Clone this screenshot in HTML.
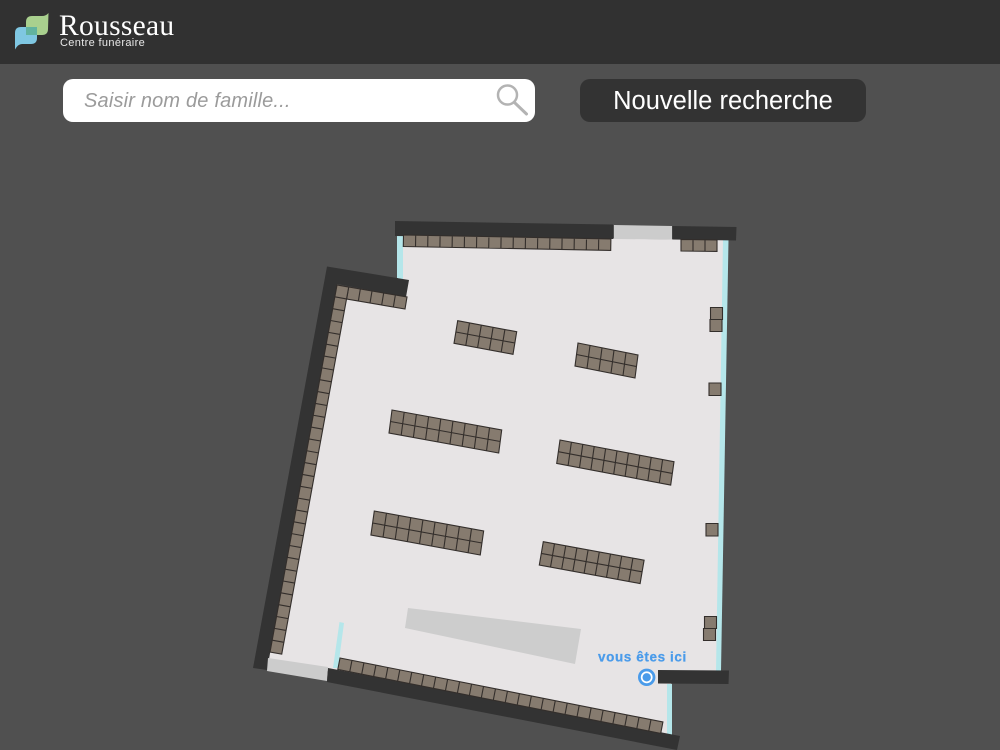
<!DOCTYPE html>
<html lang="fr">
<head>
<meta charset="utf-8">
<title>Rousseau</title>
<style>
html,body{margin:0;padding:0;width:1000px;height:750px;overflow:hidden;background:#505050}
#bar{position:absolute;left:0;top:0;width:1000px;height:64px;background:#313131}
#name{position:absolute;left:59px;top:10px;font:29.5px/32px "Liberation Serif",serif;color:#fff;letter-spacing:.3px}
#sub{position:absolute;left:60px;top:37px;font:11px/13px "Liberation Sans",sans-serif;color:#e8e8e8;letter-spacing:.35px}
#search{position:absolute;left:63px;top:79px;width:472px;height:43px;background:#fff;border-radius:10px}
#ph{position:absolute;left:21px;top:9.500px;font:italic 20px/25px "Liberation Sans",sans-serif;color:#9b9b9b;letter-spacing:.18px}
#btn{position:absolute;left:580px;top:79px;width:286px;height:43px;background:#333;border-radius:10px;color:#fff;font:25.500px/44px "Liberation Sans",sans-serif;text-align:center}
svg{position:absolute;left:0;top:0}
.t{fill:#867b6f;stroke:#332e2b;stroke-width:1.100;vector-effect:non-scaling-stroke}
</style>
</head>
<body>
<svg width="1000" height="750" viewBox="0 0 1000 750">
  <!-- floor -->
  <polygon fill="#e7e4e5" points="398,236 728,240 720,671 672,671 669,735 268,660 337,285 398,297"/>
  <!-- glass -->
  <polygon fill="#b5e6ea" points="397,235 403,235 403,279 397,278"/>
  <polygon fill="#b5e6ea" points="723,240 728.500,240 721,671 716,671"/>
  <polygon fill="#b5e6ea" points="667,684 672,684 672,736 667,735"/>
  <polygon fill="#b5e6ea" points="339.500,622 344,623 338,668 333,668"/>
  <!-- walls -->
  <polygon fill="#333" points="395,221 613,224.5 613,239 395,236"/>
  <polygon fill="#ccc" points="614,225 672,226 672,239.5 614,239"/>
  <polygon fill="#333" points="672.5,226 736.5,227 736,240.5 672.5,239.5"/>
  <polygon fill="#333" points="327,266.5 409,280 406,297 337,284 267,670 253,668"/>
  <polygon fill="#ccc" points="268,658 328,667 327,681 267,671"/>
  <polygon fill="#333" points="328,668 680,736 677,750 327,682"/>
  <polygon fill="#333" points="658,670 729,670.5 728.5,684 658,683.5"/>
  <!-- stage -->
  <polygon fill="#cdcdcd" points="408,608 581,629 575,664 405,628"/>
  <!-- tiles -->
  <path class="t" transform="matrix(12.2 .23 -.2 11.5 403.5 235)" d="M0 0H17V1H0ZM1 0V1M2 0V1M3 0V1M4 0V1M5 0V1M6 0V1M7 0V1M8 0V1M9 0V1M10 0V1M11 0V1M12 0V1M13 0V1M14 0V1M15 0V1M16 0V1"/>
  <path class="t" transform="matrix(12 .15 0 11.5 681 239.5)" d="M0 0H3V1H0ZM1 0V1M2 0V1"/>
  <path class="t" transform="matrix(11.67 2 -2 12 337 285)" d="M0 0H6V1H0ZM1 0V1M2 0V1M3 0V1M4 0V1M5 0V1"/>
  <path class="t" transform="matrix(11.7 2.1 -2.16 11.84 337 285)" d="M0 0H1V31H0ZM0 1H1M0 2H1M0 3H1M0 4H1M0 5H1M0 6H1M0 7H1M0 8H1M0 9H1M0 10H1M0 11H1M0 12H1M0 13H1M0 14H1M0 15H1M0 16H1M0 17H1M0 18H1M0 19H1M0 20H1M0 21H1M0 22H1M0 23H1M0 24H1M0 25H1M0 26H1M0 27H1M0 28H1M0 29H1M0 30H1"/>
  <path class="t" transform="matrix(11.96 2.37 -2.2 11.4 340 658)" d="M0 0H27V1H0ZM1 0V1M2 0V1M3 0V1M4 0V1M5 0V1M6 0V1M7 0V1M8 0V1M9 0V1M10 0V1M11 0V1M12 0V1M13 0V1M14 0V1M15 0V1M16 0V1M17 0V1M18 0V1M19 0V1M20 0V1M21 0V1M22 0V1M23 0V1M24 0V1M25 0V1M26 0V1"/>
  <path class="t" transform="matrix(11.8 2.2 -1.85 11.3 457.7 320.7)" d="M0 0H5V2H0ZM0 1H5M1 0V2M2 0V2M3 0V2M4 0V2"/>
  <path class="t" transform="matrix(12 2.4 -1.5 11.5 578 343)" d="M0 0H5V2H0ZM0 1H5M1 0V2M2 0V2M3 0V2M4 0V2"/>
  <path class="t" transform="matrix(12.19 2.22 -1.5 11.5 392 410)" d="M0 0H9V2H0ZM0 1H9M1 0V2M2 0V2M3 0V2M4 0V2M5 0V2M6 0V2M7 0V2M8 0V2"/>
  <path class="t" transform="matrix(11.4 2.17 -1.65 11.7 560 440)" d="M0 0H10V2H0ZM0 1H10M1 0V2M2 0V2M3 0V2M4 0V2M5 0V2M6 0V2M7 0V2M8 0V2M9 0V2"/>
  <path class="t" transform="matrix(12.15 2.22 -1.7 12 374.3 511)" d="M0 0H9V2H0ZM0 1H9M1 0V2M2 0V2M3 0V2M4 0V2M5 0V2M6 0V2M7 0V2M8 0V2"/>
  <path class="t" transform="matrix(11.2 2.05 -2 11.7 543.3 541.7)" d="M0 0H9V2H0ZM0 1H9M1 0V2M2 0V2M3 0V2M4 0V2M5 0V2M6 0V2M7 0V2M8 0V2"/>
  <rect class="t" x="710.5" y="307.5" width="12" height="12"/>
  <rect class="t" x="710" y="319.5" width="12" height="12"/>
  <rect class="t" x="709" y="383" width="12" height="12.5"/>
  <rect class="t" x="706" y="523.5" width="12" height="12.5"/>
  <rect class="t" x="704.5" y="616.5" width="12" height="12"/>
  <rect class="t" x="703.5" y="628.5" width="12" height="12"/>
  <!-- marker -->
  <text x="598" y="661.5" font-family="Liberation Sans, sans-serif" font-weight="700" font-size="13.5" letter-spacing=".6" stroke="#4a9bea" stroke-width=".25" fill="#4a9bea">vous êtes ici</text>
  <circle cx="646.7" cy="677.3" r="7.300" fill="#fff" stroke="#4a9bea" stroke-width="2.800"/>
  <circle cx="646.7" cy="677.3" r="4.200" fill="#4a9bea"/>
</svg>

<div id="bar">
  <svg width="60" height="64" viewBox="0 0 60 64">
    <path fill="#a9d08e" d="M26 22Q26 16 32 16L42 16Q46 16 48.5 13L48 29Q48 35 42 35L31 35Q26 35 26 30Z"/>
    <path fill="#7fc7e2" d="M15 33Q15 27 21 27L32 27Q37 27 37 32L37 38Q37 44 31 44L22 44Q18 44 15 49.500Z"/>
    <path fill="#62b39f" d="M26 27H37V35H26Z"/>
  </svg>
  <div id="name">Rousseau</div>
  <div id="sub">Centre funéraire</div>
</div>

<div id="search">
  <div id="ph">Saisir nom de famille...</div>
  <svg style="left:430px;top:3px" width="42" height="38" viewBox="0 0 42 38">
    <circle cx="14.500" cy="13" r="9.500" fill="none" stroke="#b3b3b3" stroke-width="2.500"/>
    <path d="M22 21L33.500 32" fill="none" stroke="#b3b3b3" stroke-width="3" stroke-linecap="round"/>
  </svg>
</div>
<div id="btn">Nouvelle recherche</div>
</body>
</html>
